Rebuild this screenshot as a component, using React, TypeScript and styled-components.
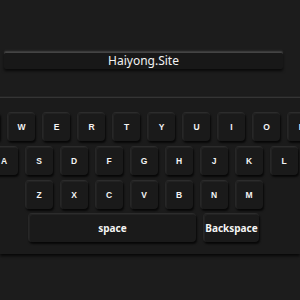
import React from "react";
import styled, { createGlobalStyle } from "styled-components";

const Global = createGlobalStyle`
  html, body { margin: 0; padding: 0; background: #1c1c1c; }
  body { width: 300px; height: 300px; overflow: hidden; font-family: "Liberation Sans", Arial, sans-serif; }
`;

const Page = styled.div`
  width: 287px;
  padding-top: 51px;
  display: flex;
  flex-direction: column;
  align-items: center;
`;

const Input = styled.div`
  box-sizing: border-box;
  width: 279px;
  height: 18px;
  background: #181818;
  border-radius: 2px;
  border-top: 1px solid #3a3a3a;
  box-shadow: 0 1px 0 #444 inset, 0 2px 3px rgba(0, 0, 0, 0.7), 0 -1px 2px rgba(255, 255, 255, 0.06);
  color: #f2f2f2;
  font-family: "Noto Sans", "Open Sans", sans-serif;
  font-size: 12px;
  line-height: 17px;
  text-align: center;
`;

const Panel = styled.div`
  box-sizing: border-box;
  width: 300px;
  margin-top: 28px;
  padding: 14px 0 12px 0;
  background: #1b1b1b;
  border-top: 1px solid #343434;
  box-shadow: 0 2px 3px rgba(0, 0, 0, 0.8), 0 -1px 0 #252525;
`;

const Inner = styled.div`
  width: 287px;
  display: flex;
  flex-direction: column;
  gap: 5px;
`;

const Row = styled.div<{ $tight?: boolean }>`
  display: flex;
  justify-content: center;
  gap: 7px;
  margin-top: ${(p) => (p.$tight ? -1 : 0)}px;
`;

const Key = styled.div<{ $w?: number }>`
  box-sizing: border-box;
  flex: none;
  width: ${(p) => p.$w ?? 28}px;
  height: 29px;
  border-radius: 4px;
  background: #1a1a1a;
  border-top: 1px solid #2c2c2c;
  border-left: 1px solid #272727;
  box-shadow: 1px 2px 2px rgba(0, 0, 0, 0.75), inset 1px 1px 1px rgba(255, 255, 255, 0.04);
  color: #f4f4f4;
  display: flex;
  align-items: center;
  justify-content: center;
  font-family: "Liberation Sans", Arial, sans-serif;
  font-weight: bold;
  font-size: 8.5px;
  line-height: 10px;
`;

const WideLabel = styled.span`
  font-family: "Noto Sans", "Open Sans", sans-serif;
  font-weight: bold;
  font-size: 10px;
  line-height: 12px;
`;

const rows = ["QWERTYUIOP", "ASDFGHJKL", "ZXCVBNM"];

export default function App() {
  return (
    <>
      <Global />
      <Page>
        <Input>Haiyong.Site</Input>
      </Page>
      <Panel>
        <Inner>
          {rows.map((r) => (
            <Row key={r}>
              {r.split("").map((c) => (
                <Key key={c}>{c}</Key>
              ))}
            </Row>
          ))}
          <Row $tight>
            <Key $w={168}>
              <WideLabel>space</WideLabel>
            </Key>
            <Key $w={56}>
              <WideLabel>Backspace</WideLabel>
            </Key>
          </Row>
        </Inner>
      </Panel>
    </>
  );
}
